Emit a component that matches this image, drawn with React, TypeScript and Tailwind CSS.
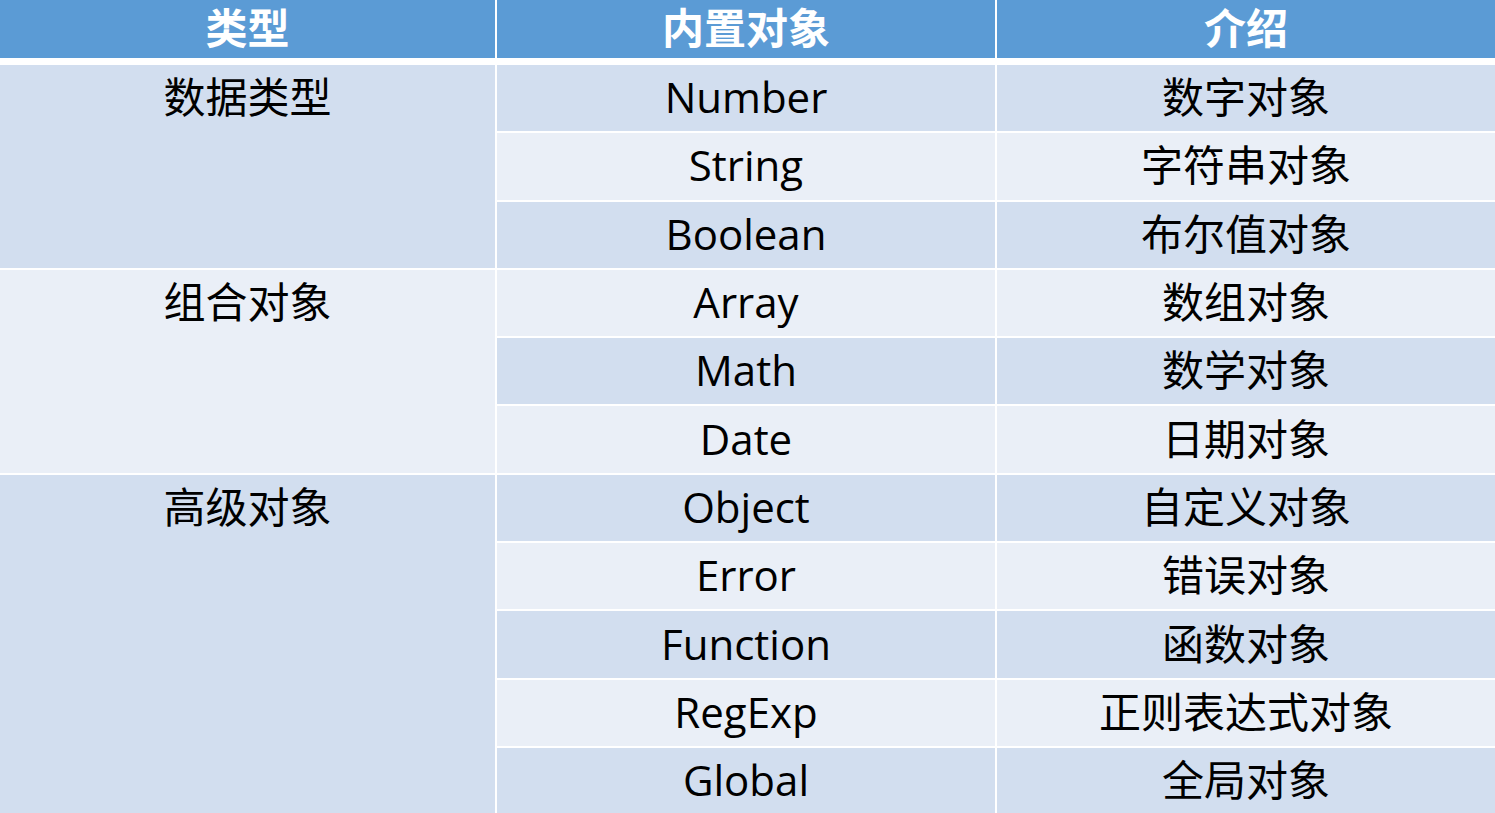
import React from 'react';

const groups = [
  {
    type: '数据类型',
    rows: [
      ['Number', '数字对象'],
      ['String', '字符串对象'],
      ['Boolean', '布尔值对象'],
    ],
  },
  {
    type: '组合对象',
    rows: [
      ['Array', '数组对象'],
      ['Math', '数学对象'],
      ['Date', '日期对象'],
    ],
  },
  {
    type: '高级对象',
    rows: [
      ['Object', '自定义对象'],
      ['Error', '错误对象'],
      ['Function', '函数对象'],
      ['RegExp', '正则表达式对象'],
      ['Global', '全局对象'],
    ],
  },
];

const App: React.FC = () => {
  let index = 0;
  return (
    <div
      className="w-[1495px] h-[813px] overflow-hidden bg-white text-black"
      style={{ fontFamily: '"Open Sans", "Noto Sans CJK SC", sans-serif' }}
    >
      <div className="grid grid-cols-[495px_498px_498px] grid-rows-[58px] gap-x-[2px] h-[58px] text-white font-bold text-[42px] leading-[52px]">
        <div className="bg-[#5b9bd5] flex items-center justify-center pb-[2px]">类型</div>
        <div className="bg-[#5b9bd5] flex items-center justify-center pb-[2px]">内置对象</div>
        <div className="bg-[#5b9bd5] flex items-center justify-center pb-[2px]">介绍</div>
      </div>
      <div className="h-[7px]" />
      <div className="grid grid-cols-[495px_498px_498px] gap-[2px] auto-rows-[66.3px] text-[42px] leading-[56px]">
        {groups.map((g, gi) => {
          const start = index;
          index += g.rows.length;
          const bg = gi % 2 === 0 ? 'bg-[#d2deef]' : 'bg-[#eaeff7]';
          return (
            <React.Fragment key={g.type}>
              <div
                className={`${bg} flex justify-center`}
                style={{ gridRow: `${start + 1} / span ${g.rows.length}`, gridColumn: 1 }}
              >
                <div className="h-[64px] flex items-center">{g.type}</div>
              </div>
              {g.rows.map(([name, desc], ri) => {
                const row = start + ri;
                const rbg = row % 2 === 0 ? 'bg-[#d2deef]' : 'bg-[#eaeff7]';
                return (
                  <React.Fragment key={name}>
                    <div
                      className={`${rbg} flex items-center justify-center pb-[2px]`}
                      style={{ gridRow: row + 1, gridColumn: 2 }}
                    >
                      {name}
                    </div>
                    <div
                      className={`${rbg} flex items-center justify-center pb-[2px]`}
                      style={{ gridRow: row + 1, gridColumn: 3 }}
                    >
                      {desc}
                    </div>
                  </React.Fragment>
                );
              })}
            </React.Fragment>
          );
        })}
      </div>
    </div>
  );
};

export default App;
